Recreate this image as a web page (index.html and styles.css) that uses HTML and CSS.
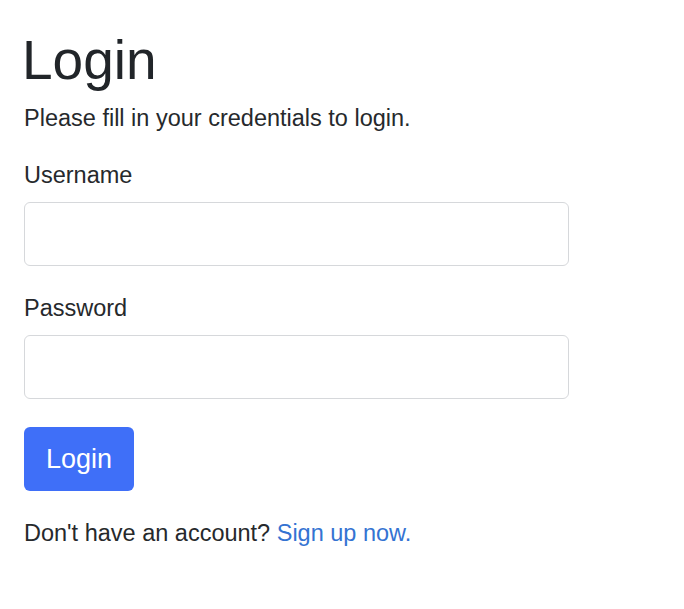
FILE: index.html
```html
<!DOCTYPE html>
<html lang="en">
<head>
<meta charset="utf-8">
<title>Login</title>
<link rel="stylesheet" href="styles.css">
</head>
<body>
<div class="wrapper">
  <h1 class="title">Login</h1>
  <p class="intro">Please fill in your credentials to login.</p>
  <form class="form">
    <div class="field">
      <label class="label" for="username">Username</label>
      <input class="input" id="username" type="text">
    </div>
    <div class="field">
      <label class="label" for="password">Password</label>
      <input class="input" id="password" type="password">
    </div>
    <div class="actions">
      <button class="btn" type="button">Login</button>
    </div>
    <p class="note">Don't have an account? <a class="link" href="#">Sign up now.</a></p>
  </form>
</div>
</body>
</html>
```

FILE: styles.css
```css
html, body {
  margin: 0;
  padding: 0;
  background: #ffffff;
}

body {
  font-family: "Liberation Sans", Arial, sans-serif;
  color: #26292c;
}

.wrapper {
  width: 545px;
  padding: 29px 0 0 24px;
}

.title {
  margin: 0;
  font-size: 55px;
  line-height: 62px;
  font-weight: 400;
  color: #212529;
  margin-left: -2px;
}

.intro {
  margin: 11px 0 0;
  font-size: 23.5px;
  line-height: 33px;
}

.form {
  display: flex;
  flex-direction: column;
  margin-top: 24px;
}

.field {
  display: flex;
  flex-direction: column;
  gap: 10px;
  margin-bottom: 26px;
}

.label {
  font-size: 23.5px;
  line-height: 33px;
}

.input {
  box-sizing: border-box;
  width: 545px;
  height: 64px;
  border: 1.5px solid #d6d8db;
  border-radius: 6px;
  background: #fff;
  margin: 0;
  padding: 0 16px;
  font-size: 22px;
  font-family: inherit;
}

.actions {
  margin-top: 2px;
}

.btn {
  box-sizing: border-box;
  width: 110px;
  height: 64px;
  border: none;
  border-radius: 6px;
  background: #3f6ff8;
  color: #ffffff;
  font-family: "Liberation Sans", Arial, sans-serif;
  font-size: 27px;
  padding: 0;
  cursor: pointer;
}

.note {
  margin: 26px 0 0;
  font-size: 23.5px;
  line-height: 33px;
}

.link {
  color: #3473d2;
  text-decoration: none;
}
```
